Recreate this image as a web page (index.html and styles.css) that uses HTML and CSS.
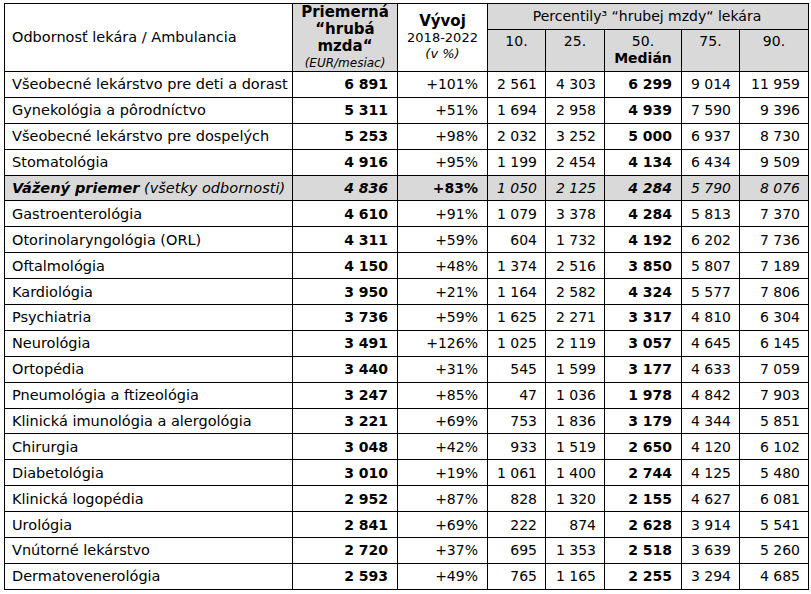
FILE: index.html
```html
<!DOCTYPE html>
<html lang="sk">
<head>
<meta charset="utf-8">
<link rel="stylesheet" href="styles.css">
</head>
<body>
<table class="tbl">
  <colgroup>
    <col class="c-name"><col class="c-avg"><col class="c-dev">
    <col class="c-p10"><col class="c-p25"><col class="c-p50"><col class="c-p75"><col class="c-p90">
  </colgroup>
  <thead>
    <tr class="h1">
      <th rowspan="2" class="h-name">Odbornosť lekára / Ambulancia</th>
      <th rowspan="2" class="h-avg"><span class="h-big">Priemerná<br>“hrubá<br>mzda“</span><br><span class="h-it">(EUR/mesiac)</span></th>
      <th rowspan="2" class="h-dev"><span class="h-big">Vývoj</span><br><span class="h-sm">2018-2022</span><br><span class="h-it2">(v %)</span></th>
      <th colspan="5" class="h-perc">Percentily³ “hrubej mzdy“ lekára</th>
    </tr>
    <tr class="h2">
      <th class="h-p">10.</th>
      <th class="h-p">25.</th>
      <th class="h-p">50.<br><b>Medián</b></th>
      <th class="h-p">75.</th>
      <th class="h-p">90.</th>
    </tr>
  </thead>
  <tbody>
    <tr><td class="name">Všeobecné lekárstvo pre deti a dorast</td><td class="avg">6 891</td><td class="dev">+101%</td><td>2 561</td><td>4 303</td><td class="med">6 299</td><td>9 014</td><td>11 959</td></tr>
    <tr><td class="name">Gynekológia a pôrodníctvo</td><td class="avg">5 311</td><td class="dev">+51%</td><td>1 694</td><td>2 958</td><td class="med">4 939</td><td>7 590</td><td>9 396</td></tr>
    <tr><td class="name">Všeobecné lekárstvo pre dospelých</td><td class="avg">5 253</td><td class="dev">+98%</td><td>2 032</td><td>3 252</td><td class="med">5 000</td><td>6 937</td><td>8 730</td></tr>
    <tr><td class="name">Stomatológia</td><td class="avg">4 916</td><td class="dev">+95%</td><td>1 199</td><td>2 454</td><td class="med">4 134</td><td>6 434</td><td>9 509</td></tr>
    <tr class="wavg"><td class="name"><b>Vážený priemer</b> (všetky odbornosti)</td><td class="avg">4 836</td><td class="dev">+83%</td><td>1 050</td><td>2 125</td><td class="med">4 284</td><td>5 790</td><td>8 076</td></tr>
    <tr><td class="name">Gastroenterológia</td><td class="avg">4 610</td><td class="dev">+91%</td><td>1 079</td><td>3 378</td><td class="med">4 284</td><td>5 813</td><td>7 370</td></tr>
    <tr><td class="name">Otorinolaryngológia (ORL)</td><td class="avg">4 311</td><td class="dev">+59%</td><td>604</td><td>1 732</td><td class="med">4 192</td><td>6 202</td><td>7 736</td></tr>
    <tr><td class="name">Oftalmológia</td><td class="avg">4 150</td><td class="dev">+48%</td><td>1 374</td><td>2 516</td><td class="med">3 850</td><td>5 807</td><td>7 189</td></tr>
    <tr><td class="name">Kardiológia</td><td class="avg">3 950</td><td class="dev">+21%</td><td>1 164</td><td>2 582</td><td class="med">4 324</td><td>5 577</td><td>7 806</td></tr>
    <tr><td class="name">Psychiatria</td><td class="avg">3 736</td><td class="dev">+59%</td><td>1 625</td><td>2 271</td><td class="med">3 317</td><td>4 810</td><td>6 304</td></tr>
    <tr><td class="name">Neurológia</td><td class="avg">3 491</td><td class="dev">+126%</td><td>1 025</td><td>2 119</td><td class="med">3 057</td><td>4 645</td><td>6 145</td></tr>
    <tr><td class="name">Ortopédia</td><td class="avg">3 440</td><td class="dev">+31%</td><td>545</td><td>1 599</td><td class="med">3 177</td><td>4 633</td><td>7 059</td></tr>
    <tr><td class="name">Pneumológia a ftizeológia</td><td class="avg">3 247</td><td class="dev">+85%</td><td>47</td><td>1 036</td><td class="med">1 978</td><td>4 842</td><td>7 903</td></tr>
    <tr><td class="name">Klinická imunológia a alergológia</td><td class="avg">3 221</td><td class="dev">+69%</td><td>753</td><td>1 836</td><td class="med">3 179</td><td>4 344</td><td>5 851</td></tr>
    <tr><td class="name">Chirurgia</td><td class="avg">3 048</td><td class="dev">+42%</td><td>933</td><td>1 519</td><td class="med">2 650</td><td>4 120</td><td>6 102</td></tr>
    <tr><td class="name">Diabetológia</td><td class="avg">3 010</td><td class="dev">+19%</td><td>1 061</td><td>1 400</td><td class="med">2 744</td><td>4 125</td><td>5 480</td></tr>
    <tr><td class="name">Klinická logopédia</td><td class="avg">2 952</td><td class="dev">+87%</td><td>828</td><td>1 320</td><td class="med">2 155</td><td>4 627</td><td>6 081</td></tr>
    <tr><td class="name">Urológia</td><td class="avg">2 841</td><td class="dev">+69%</td><td>222</td><td>874</td><td class="med">2 628</td><td>3 914</td><td>5 541</td></tr>
    <tr><td class="name">Vnútorné lekárstvo</td><td class="avg">2 720</td><td class="dev">+37%</td><td>695</td><td>1 353</td><td class="med">2 518</td><td>3 639</td><td>5 260</td></tr>
    <tr><td class="name">Dermatovenerológia</td><td class="avg">2 593</td><td class="dev">+49%</td><td>765</td><td>1 165</td><td class="med">2 255</td><td>3 294</td><td>4 685</td></tr>
  </tbody>
</table>
</body>
</html>
```

FILE: styles.css
```css
html, body {
  margin: 0;
  padding: 0;
  background: #ffffff;
}
body {
  padding: 3px 0 0 4px;
  font-family: "DejaVu Sans", Verdana, sans-serif;
  font-size: 13px;
  color: #000;
}
.tbl {
  border-collapse: collapse;
  table-layout: fixed;
  width: 804px;
}
.c-name { width: 288px; }
.c-avg { width: 105px; }
.c-dev { width: 90px; }
.c-p10 { width: 58px; }
.c-p25 { width: 59px; }
.c-p50 { width: 77px; }
.c-p75 { width: 58px; }
.c-p90 { width: 69px; }

.tbl th, .tbl td {
  border: 1px solid #000;
  padding: 0 9px 0 7px;
  white-space: nowrap;
  overflow: hidden;
}
.tbl th {
  font-weight: normal;
  text-align: center;
  line-height: 15px;
}
.h1 { height: 26px; }
.h2 { height: 42px; }
.tbl th.h-name {
  text-align: left;
  padding-left: 7px;
  vertical-align: middle;
  font-size: 14.5px;
}
.tbl th.h-avg {
  background: #d9d9d9;
  padding: 0 2px;
  line-height: 16px;
  vertical-align: middle;
}
.tbl th.h-dev {
  padding: 0 2px;
  vertical-align: middle;
  line-height: 16px;
}
.h-big {
  font-weight: bold;
  font-size: 15px;
}
.h-it {
  font-style: italic;
  font-size: 12px;
}
.h-sm { font-size: 13px; }
.h-it2 { font-style: italic; font-size: 13px; }
.tbl th.h-perc {
  background: #d9d9d9;
  font-size: 14px;
}
.tbl th.h-p {
  background: #d9d9d9;
  vertical-align: top;
  font-size: 14px;
  padding: 3px 2px 0 2px;
  line-height: 17px;
}
.h-p b { font-weight: bold; }

.tbl tbody tr { height: 25.9px; }
.tbl td {
  text-align: right;
  font-size: 14px;
  padding-right: 8px;
}
.tbl td.name {
  text-align: left;
  padding-left: 7px;
  font-size: 14.5px;
}
.tbl td.avg, .tbl td.med {
  font-weight: bold;
  padding-right: 9px;
}
.tbl td.dev { padding-right: 9px; }

.wavg td { background: #d9d9d9; font-style: italic; }
.tbl .wavg td.dev { font-weight: bold; font-style: normal; }
.wavg td.name b { font-weight: bold; }
```
